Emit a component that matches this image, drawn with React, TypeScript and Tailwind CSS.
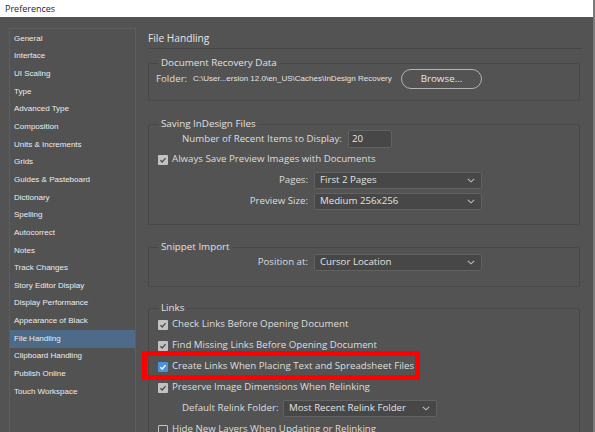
import type { ReactNode } from 'react';

const sideItems = [
  'General',
  'Interface',
  'UI Scaling',
  'Type',
  'Advanced Type',
  'Composition',
  'Units & Increments',
  'Grids',
  'Guides & Pasteboard',
  'Dictionary',
  'Spelling',
  'Autocorrect',
  'Notes',
  'Track Changes',
  'Story Editor Display',
  'Display Performance',
  'Appearance of Black',
  'File Handling',
  'Clipboard Handling',
  'Publish Online',
  'Touch Workspace',
];

const ui = { fontFamily: '"Open Sans", "Noto Sans", sans-serif' };
const small = { fontFamily: '"Liberation Sans", Arial, sans-serif' };

function Check({ state }: { state: 'on' | 'off' | 'blue' }) {
  if (state === 'off') {
    return <span className="w-[10px] h-[10px] shrink-0 rounded-[1px] border border-[#c4c4c4]" />;
  }
  return (
    <span
      className={`w-[10px] h-[10px] shrink-0 rounded-[1px] flex items-center justify-center ${
        state === 'blue' ? 'bg-[#4b93dc]' : 'bg-[#c2c2c2]'
      }`}
    >
      <svg width="8" height="8" viewBox="0 0 8 8">
        <path
          d="M1.4 4.2 L3.2 5.9 L6.6 2.1"
          fill="none"
          stroke={state === 'blue' ? '#ffffff' : '#4e4e4e'}
          strokeWidth="1.4"
        />
      </svg>
    </span>
  );
}

function Select({ value, width }: { value: string; width: string }) {
  return (
    <div
      className={`${width} h-[17px] flex items-center justify-between pl-[5px] pr-[6px] bg-[#474747] border border-[#626262] rounded-[2px] text-[#e2e2e2]`}
    >
      <span className="whitespace-nowrap">{value}</span>
      <svg width="8" height="5" viewBox="0 0 8 5">
        <path d="M0.8 0.8 L4 3.8 L7.2 0.8" fill="none" stroke="#bdbdbd" strokeWidth="1.1" />
      </svg>
    </div>
  );
}

function Group({ label, className, children }: { label: string; className: string; children: ReactNode }) {
  return (
    <fieldset className={`border border-[#484848] rounded-[2px] pl-[9px] pr-[9px] ${className}`}>
      <legend className="px-[3px] leading-[12px] text-[9.8px] text-[#e0e0e0] whitespace-nowrap">{label}</legend>
      {children}
    </fieldset>
  );
}

function CheckRow({ label, state }: { label: string; state: 'on' | 'off' | 'blue' }) {
  return (
    <div className="h-[21px] flex items-center gap-[4px]">
      <Check state={state} />
      <span className="whitespace-nowrap">{label}</span>
    </div>
  );
}

export default function App() {
  return (
    <div className="w-[595px] h-[432px] flex overflow-hidden bg-[#7a7a7a]" style={ui}>
      <div className="w-[593px] h-full flex flex-col bg-[#535353]">
        <div className="h-[17px] shrink-0 bg-white flex items-center pl-[5px] text-[9px] text-[#1e1e1e]">
          Preferences
        </div>

        <div className="flex flex-1 min-h-0 pt-[11px] pl-[9px]">
          <div className="w-[127px] shrink-0 border-l border-t border-r border-[#5e5e5e] bg-[#525252] pt-[1px]">
            {sideItems.map(item => (
              <div
                key={item}
                className={`h-[17.65px] flex items-center pl-[4px] text-[8px] text-[#ececec] whitespace-nowrap ${
                  item === 'File Handling' ? 'bg-[#4d6a88]' : ''
                }`}
                style={small}
              >
                {item}
              </div>
            ))}
          </div>

          <div className="flex-1 pt-[1px] pl-[12px] pr-[13px] text-[9.7px] text-[#dedede]">
            <div className="h-[19px] flex items-center text-[10.2px] text-[#e4e4e4]">File Handling</div>
            <div className="h-[1px] bg-[#474747] mr-[-2px]" />

            <Group label="Document Recovery Data" className="mt-[8px] pb-[11px]">
              <div className="h-[20px] flex items-center -ml-[2px]">
                <span className="w-[37px]">Folder:</span>
                <span className="text-[8px] text-[#e4e4e4] w-[208px] whitespace-nowrap" style={small}>
                  C:\User...ersion 12.0\en_US\Caches\InDesign Recovery
                </span>
                <button className="w-[81px] h-[20px] rounded-full border-[1.5px] border-[#b4b4b4] text-[9.8px] text-[#e6e6e6]">
                  Browse...
                </button>
              </div>
            </Group>

            <Group label="Saving InDesign Files" className="mt-[17px] pb-[12px]">
              <div className="h-[18px] flex items-center pl-[24px]">
                <span className="w-[166px] whitespace-nowrap">Number of Recent Items to Display:</span>
                <div className="w-[44px] h-[18px] flex items-center pl-[3px] bg-[#474747] border border-[#626262] rounded-[2px] text-[#e6e6e6]">
                  20
                </div>
              </div>
              <div className="pt-[1px]">
                <CheckRow label="Always Save Preview Images with Documents" state="on" />
              </div>
              <div className="h-[21px] flex items-center">
                <span className="w-[150px] text-right">Pages:</span>
                <div className="ml-[6px]">
                  <Select value="First 2 Pages" width="w-[168px]" />
                </div>
              </div>
              <div className="h-[21px] flex items-center">
                <span className="w-[150px] text-right">Preview Size:</span>
                <div className="ml-[6px]">
                  <Select value="Medium 256x256" width="w-[168px]" />
                </div>
              </div>
            </Group>

            <Group label="Snippet Import" className="mt-[16px] pb-[14px]">
              <div className="h-[19px] flex items-center">
                <span className="w-[150px] text-right">Position at:</span>
                <div className="ml-[6px]">
                  <Select value="Cursor Location" width="w-[168px]" />
                </div>
              </div>
            </Group>

            <Group label="Links" className="mt-[15px] pb-[14px]">
              <CheckRow label="Check Links Before Opening Document" state="on" />
              <CheckRow label="Find Missing Links Before Opening Document" state="on" />
              <div className="relative">
                <CheckRow label="Create Links When Placing Text and Spreadsheet Files" state="blue" />
                <span className="absolute -left-[16px] -top-[5px] w-[278px] h-[29px] border-[5px] border-[#ff0000]" />
              </div>
              <CheckRow label="Preserve Image Dimensions When Relinking" state="on" />
              <div className="h-[21px] flex items-center pl-[24px]">
                <span className="w-[101px] whitespace-nowrap">Default Relink Folder:</span>
                <Select value="Most Recent Relink Folder" width="w-[154px]" />
              </div>
              <CheckRow label="Hide New Layers When Updating or Relinking" state="off" />
            </Group>
          </div>
        </div>
      </div>
    </div>
  );
}
